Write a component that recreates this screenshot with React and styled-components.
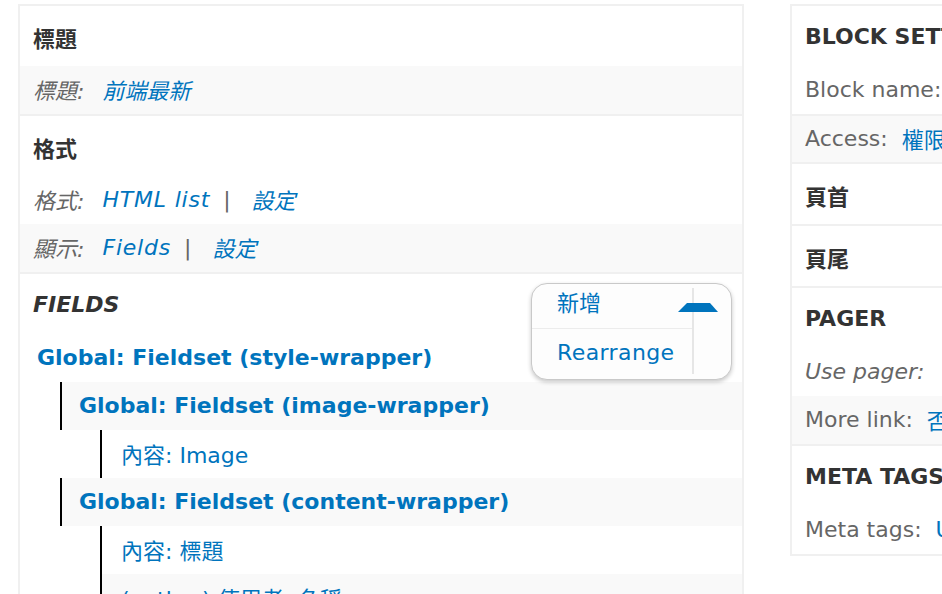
import React from "react";
import styled, { createGlobalStyle } from "styled-components";

const GlobalStyle = createGlobalStyle`
  html, body {
    margin: 0;
    padding: 0;
    background: #fff;
    overflow: hidden;
  }
  body {
    font-family: "DejaVu Sans", "Noto Sans CJK TC", sans-serif;
    font-size: 22px;
    color: #333;
  }
`;

const Page = styled.div`
  display: flex;
  align-items: flex-start;
  gap: 46px;
  padding: 4px 0 0 18px;
  width: 1400px;
`;

const Column = styled.div`
  flex: 0 0 auto;
  box-sizing: border-box;
  width: ${(p) => p.$width}px;
  border: 2px solid #f0f0f0;
  background: #fff;
`;

const Section = styled.div`
  position: relative;
  & + & {
    border-top: 2px solid #f0f0f0;
  }
`;

const Header = styled.div`
  height: 60px;
  box-sizing: border-box;
  display: flex;
  align-items: center;
  padding: 1px 0 0 13px;
  font-weight: bold;
  font-style: ${(p) => (p.$italic ? "italic" : "normal")};
  color: #333;
  white-space: nowrap;
`;

const Row = styled.div`
  height: 48px;
  box-sizing: border-box;
  display: flex;
  align-items: center;
  padding: 0 0 2px 13px;
  background: ${(p) => (p.$striped ? "#f9f9f9" : "#fff")};
  border-top: ${(p) => (p.$topLine ? "2px solid #f0f0f0" : "none")};
  font-style: ${(p) => (p.$italic ? "italic" : "normal")};
  white-space: nowrap;
`;

const Label = styled.span`
  color: #666;
  margin-right: ${(p) => (p.$wide ? 18 : 14)}px;
`;

const Link = styled.a`
  color: #0074bd;
  text-decoration: none;
  font-weight: ${(p) => (p.$bold ? "bold" : "normal")};
  letter-spacing: ${(p) => (p.$loose ? "0.8px" : "normal")};
`;

const Sep = styled.span`
  color: #666;
  margin: 0 21px 0 13px;
`;

const indent = [
  { margin: 0, pad: 17, border: false },
  { margin: 40, pad: 17, border: true },
  { margin: 80, pad: 19, border: true },
];

const FieldRow = styled.div`
  height: 48px;
  box-sizing: border-box;
  display: flex;
  align-items: center;
  margin-left: ${(p) => indent[p.$level].margin}px;
  padding-left: ${(p) => indent[p.$level].pad}px;
  padding-bottom: 2px;
  border-left: ${(p) => (indent[p.$level].border ? "2px solid #000" : "none")};
  background: ${(p) => (p.$striped ? "#f9f9f9" : "#fff")};
  white-space: nowrap;
`;

const Dropdown = styled.div`
  position: absolute;
  top: 9px;
  right: 10px;
  width: 201px;
  height: 97px;
  box-sizing: border-box;
  display: flex;
  border: 1px solid #c9c9c9;
  border-radius: 16px;
  background: #fdfdfd;
  box-shadow: 0 2px 4px rgba(0, 0, 0, 0.22);
  overflow: hidden;
`;

const DropList = styled.div`
  width: 160px;
  display: flex;
  flex-direction: column;
`;

const DropItem = styled.a`
  display: flex;
  align-items: center;
  box-sizing: border-box;
  height: ${(p) => p.$height}px;
  padding: 0 0 ${(p) => p.$lift}px 25px;
  color: #0074bd;
  text-decoration: none;
  letter-spacing: ${(p) => (p.$loose ? "0.4px" : "normal")};
  & + & {
    border-top: 1px solid #ececec;
  }
`;

const DropRule = styled.div`
  width: 2px;
  margin: 4px 0 5px;
  background: #e6e6e6;
`;

const Toggle = styled.svg`
  position: absolute;
  left: 146px;
  top: 19px;
  width: 40px;
  height: 9px;
`;

const Entry = ({ label, children, italic, striped, topLine }) => (
  <Row $italic={italic} $striped={striped} $topLine={topLine}>
    <Label $wide={italic}>{label}</Label>
    {children}
  </Row>
);

export default function App() {
  return (
    <>
      <GlobalStyle />
      <Page>
        <Column $width={726}>
          <Section>
            <Header>標題</Header>
            <Entry label="標題:" italic striped>
              <Link>前端最新</Link>
            </Entry>
          </Section>
          <Section>
            <Header>格式</Header>
            <Entry label="格式:" italic>
              <Link $loose>HTML list</Link>
              <Sep>|</Sep>
              <Link>設定</Link>
            </Entry>
            <Entry label="顯示:" italic striped>
              <Link $loose>Fields</Link>
              <Sep>|</Sep>
              <Link>設定</Link>
            </Entry>
          </Section>
          <Section>
            <Header $italic>FIELDS</Header>
            <Dropdown>
              <DropList>
                <DropItem $height={44} $lift={10}>新增</DropItem>
                <DropItem $height={51} $lift={3} $loose>Rearrange</DropItem>
              </DropList>
              <DropRule />
              <Toggle viewBox="0 0 40 9">
                <polygon points="9,0 32,0 40,9 0,9" fill="#0074bd" />
              </Toggle>
            </Dropdown>
            <FieldRow $level={0}>
              <Link $bold>Global: Fieldset (style-wrapper)</Link>
            </FieldRow>
            <FieldRow $level={1} $striped>
              <Link $bold>Global: Fieldset (image-wrapper)</Link>
            </FieldRow>
            <FieldRow $level={2}>
              <Link>內容: Image</Link>
            </FieldRow>
            <FieldRow $level={1} $striped>
              <Link $bold>Global: Fieldset (content-wrapper)</Link>
            </FieldRow>
            <FieldRow $level={2}>
              <Link>內容: 標題</Link>
            </FieldRow>
            <FieldRow $level={2} $striped>
              <Link>(author) 使用者: 名稱</Link>
            </FieldRow>
            <FieldRow $level={2}>
              <Link>內容: 內文</Link>
            </FieldRow>
          </Section>
        </Column>

        <Column $width={420}>
          <Section>
            <Header>BLOCK SETTINGS</Header>
            <Entry label="Block name:">
              <Link>無</Link>
            </Entry>
            <Entry label="Access:" striped topLine>
              <Link>權限</Link>
              <Sep>|</Sep>
              <Link>設定</Link>
            </Entry>
          </Section>
          <Section>
            <Header>頁首</Header>
          </Section>
          <Section>
            <Header>頁尾</Header>
          </Section>
          <Section>
            <Header>PAGER</Header>
            <Entry label="Use pager:" italic>
              <Link>顯示所有項目</Link>
            </Entry>
            <Entry label="More link:" striped>
              <Link>否</Link>
            </Entry>
          </Section>
          <Section>
            <Header>META TAGS</Header>
            <Entry label="Meta tags:">
              <Link>Using defaults</Link>
            </Entry>
          </Section>
        </Column>
      </Page>
    </>
  );
}
